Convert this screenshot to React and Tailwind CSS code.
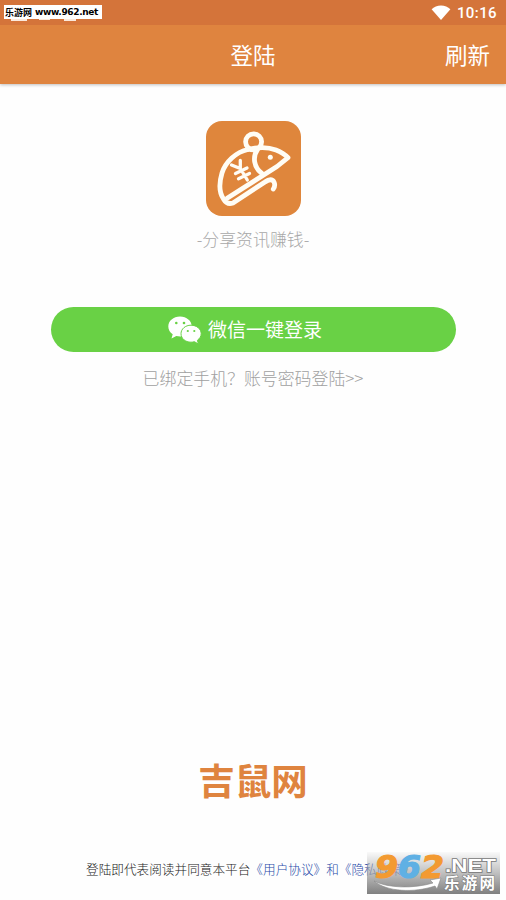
const cjk = "font-['Noto_Sans_CJK_SC',sans-serif]";

function StatusBar() {
  return (
    <div className="relative h-[25px] bg-[#d4743a] flex items-center justify-end pr-[9px] text-white">
      {/* Notification icons behind the site tag */}
      <div className="absolute left-[11px] top-[19px] w-[16px] h-[2px] bg-[#fbe9dc]" />
      <div className="absolute left-[39px] top-[19px] w-[11px] h-px bg-[#fbe9dc]" />
      <div className="absolute left-[64px] top-[19px] w-[12px] h-[2px] bg-[#fbe9dc]" />
      <div className="absolute left-1 top-[5px] w-[98px] h-[14px] bg-white text-black font-bold flex items-center pl-px gap-[3px] whitespace-nowrap">
        <span className="text-[9px] leading-none">乐游网</span>
        <span className="font-['DejaVu_Sans',sans-serif] text-[9px] leading-none tracking-[-0.35px]">www.962.net</span>
      </div>

      <svg className="w-[20px] h-[16px] mr-[6px]" viewBox="0 0 20 16" fill="currentColor">
        <path d="M.6 4.2C3 2 6.3 .4 10 .4s7 1.600 9.400 3.800L10 15z" />
      </svg>
      <span className="font-[Roboto,sans-serif] font-medium text-[15px] leading-none tracking-[0.4px] pt-[2px]">10:16</span>
    </div>
  );
}

function Header() {
  return (
    <header className="h-[59px] pb-px bg-[#df843f] shadow-[0_1px_3px_rgba(0,0,0,0.25)] grid grid-cols-3 items-center text-white text-[22.5px] leading-none">
      <span />
      <h1 className="text-center">登陆</h1>
      <button className="text-right pr-[16px]">刷新</button>
    </header>
  );
}

function MouseLogo() {
  return (
    <svg className="w-[95px] h-[95px]" viewBox="0 0 95 95" fill="none" stroke="#fffdf5" strokeLinecap="round" strokeLinejoin="round">
      <rect width="95" height="95" rx="16" fill="#df863c" stroke="none" />
      <g strokeWidth="4.800">
        <circle cx="47.600" cy="20.800" r="8" />
        {/* Back, tail end and tail */}
        <path d="M42 28.500C30 31 19.500 41 16 52c-3 10-2.500 20 1.500 26 2 3.500 5 5.500 9.500 4L59 61c4-3 7.500-3 9 0 1.200 2.500.8 4.800-.7 7" />
        {/* Head and belly */}
        <path d="M42 28.500c10-2.500 21-2.200 28 .5 5 2 9.500 5 12 7.700L71 45.500 21.500 77" />
        <path d="M51.500 28.500c-5 7-4 18 4.500 24" />
      </g>
      <g strokeWidth="3.300">
        <path d="M25.500 44L34.300 47.500V39.500M34.300 47.500l7 11.500M29.500 52.500l11.500-5.500M32.500 57.700L43.500 52.500" />
      </g>
      <circle cx="64.300" cy="36.300" r="2.500" fill="#fffdf5" stroke="none" />
    </svg>
  );
}

function WechatIcon() {
  return (
    <svg className="w-[34px] h-[28px] shrink-0" viewBox="0 0 34 28">
      <path fill="#fff" d="M12 .5C5.400 .5 .3 4.900 .3 10.500c0 3.300 1.700 6 4.400 7.800L3.500 22.500l4.800-2.500c1.300.3 2.500.5 3.900.5 6.600 0 11.600-4.400 11.600-10S18.600.5 12 .5z" />
      <path fill="#fff" stroke="#69d145" strokeWidth="1" d="M23 9.200c-5.700 0-10 3.800-10 8.500s4.300 8.500 10 8.500c1.100 0 2.300-.2 3.400-.5l4 2.300-1-3.700c2.300-1.700 3.800-4 3.800-6.600 0-4.700-4.500-8.500-10.200-8.500z" />
      <g fill="#69d145">
        <circle cx="8.300" cy="7" r="1.300" />
        <circle cx="16" cy="7" r="1.300" />
        <circle cx="19.800" cy="15" r="1.100" />
        <circle cx="26.300" cy="15" r="1.100" />
      </g>
    </svg>
  );
}

function Watermark() {
  return (
    <div className="absolute left-[367px] top-[852px] w-[133px] h-[42px] bg-linear-to-b from-[#d0d0d0]/10 via-[#a5a5a5]/70 via-50% to-[#808080]">
      <svg className="w-[133px] h-[42px] overflow-visible" viewBox="0 0 133 42">
        <g className="font-['DejaVu_Sans',sans-serif] font-bold italic" fontSize="32" strokeWidth="1.200">
          <text x="8" y="26" fill="#f39a31" stroke="#f39a31" textLength="23" lengthAdjust="spacingAndGlyphs">9</text>
          <text x="31" y="26" fill="#5fb0e4" stroke="#5fb0e4" textLength="23" lengthAdjust="spacingAndGlyphs">6</text>
          <text x="54" y="26" fill="#f39a31" stroke="#f39a31" textLength="23" lengthAdjust="spacingAndGlyphs">2</text>
        </g>
        <text x="78" y="20" fontSize="19" fill="#fff" stroke="#777" strokeWidth="1.500" paintOrder="stroke" textLength="51" lengthAdjust="spacingAndGlyphs" className="font-['Liberation_Sans',sans-serif] font-bold">.NET</text>
        <text x="77" y="37" fontSize="15.500" fill="#fff" stroke="#777" strokeWidth="1" paintOrder="stroke" textLength="51" className="font-['Noto_Sans_CJK_SC',sans-serif] font-bold">乐游网</text>
        <path d="M7 29c13 7 39 8 59 2l-3-3 11-2-4 11-2-3C47 41 20 40 7 29z" fill="#fff" stroke="#888" strokeWidth=".6" />
      </svg>
    </div>
  );
}

export default function App() {
  return (
    <div className={`relative w-[506px] h-[900px] bg-[#fefefe] overflow-hidden flex flex-col ${cjk}`}>
      <StatusBar />
      <Header />

      <main className="flex flex-col items-center pt-[37px]">
        <MouseLogo />
        <p className="mt-[13px] h-[20px] leading-[20px] text-[16.9px] font-light text-[#a8a8a8]">-分享资讯赚钱-</p>

        <button className="mt-[58px] w-[405px] h-[45px] rounded-full bg-[#69d145] text-white text-[19px] leading-none flex items-center justify-center gap-[6px] pr-[16px]">
          <WechatIcon />
          <span className="pb-[2px]">微信一键登录</span>
        </button>
        <a className="mt-[16px] h-[20px] leading-[20px] text-[16.9px] font-light text-[#a0a0a0]">已绑定手机？账号密码登陆&gt;&gt;</a>
      </main>

      {/* Brand and agreement */}
      <footer className="mt-auto flex flex-col items-center">
        <h2 className="h-[40px] leading-[40px] text-[36.5px] font-bold text-[#df843f]">吉鼠网</h2>
        <p className="mt-[59px] mb-[21px] h-[20px] w-full pl-[86px] leading-[20px] text-[12.65px] font-light text-[#222] whitespace-nowrap">
          登陆即代表阅读并同意本平台<span className="text-[#1f49a8]">《用户协议》和《隐私政策》</span>
        </p>
      </footer>

      <Watermark />
    </div>
  );
}
